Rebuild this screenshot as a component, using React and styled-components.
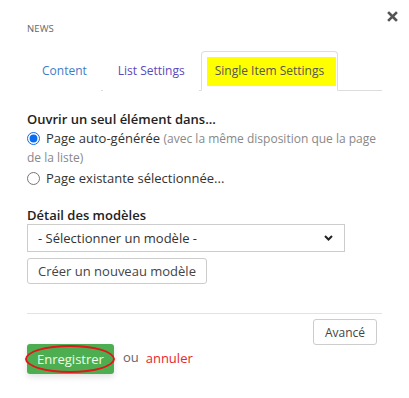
import React, { useState } from 'react';
import styled, { createGlobalStyle } from 'styled-components';

const GlobalStyle = createGlobalStyle`
  body {
    margin: 0;
    background: #fff;
    font-family: "Open Sans", "Liberation Sans", sans-serif;
    font-size: 13px;
    color: #333;
  }
`;

const Dialog = styled.div`
  position: relative;
  width: 409px;
  height: 398px;
  box-sizing: border-box;
  padding: 22px 27px 0 27px;
`;

const CloseButton = styled.button`
  position: absolute;
  top: 11px;
  right: 11px;
  width: 11px;
  height: 11px;
  padding: 0;
  border: none;
  background: none;
  cursor: pointer;
  display: flex;
`;

const Title = styled.div`
  font-size: 9.5px;
  color: #666;
  letter-spacing: 0.1px;
  line-height: 14px;
`;

const Tabs = styled.ul`
  display: flex;
  list-style: none;
  margin: 15px 0 0 0;
  padding: 0;
  border-bottom: 1px solid #ddd;
  font-size: 12px;
`;

const Tab = styled.li`
  margin-right: 2px;
  margin-bottom: -1px;
  padding: ${ p => p.active ? '5px 1px 3px 5px' : '10px 13px 10px 14px' };
  border: 1px solid ${ p => p.active ? '#ddd' : 'transparent' };
  border-bottom-color: ${ p => p.active ? '#fff' : 'transparent' };
  border-radius: 4px 4px 0 0;
  background: #fff;
  color: ${ p => p.color || '#555' };
  line-height: 18px;
  cursor: pointer;
`;

const Highlight = styled.span`
  display: block;
  background: #ffff00;
  padding: 5px 12px 6px 8px;
  color: #555;
`;

const Section = styled.div`
  margin-top: ${ p => p.top || 0 }px;
`;

const Heading = styled.div`
  font-weight: 600;
  color: #222;
  line-height: 19px;
`;

const RadioRow = styled.label`
  display: block;
  line-height: 19px;
  margin-top: ${ p => p.top || 0 }px;
  color: #333;
`;

const Radio = styled.input`
  width: 13px;
  height: 13px;
  margin: 0 6px 0 0;
  vertical-align: -2px;
  accent-color: #0a6cf0;
`;

const Muted = styled.span`
  color: #888;
  font-size: 12px;
`;

const SelectWrap = styled.div`
  position: relative;
  width: 318px;
  margin-top: -1px;
`;

const Select = styled.select`
  appearance: none;
  width: 100%;
  height: 28px;
  box-sizing: border-box;
  border: 1px solid #ccc;
  border-radius: 0;
  background: #fff;
  padding: 0 10px;
  font-family: inherit;
  font-size: 13px;
  color: #333;
`;

const Chevron = styled.svg`
  position: absolute;
  right: 12px;
  top: 11px;
  pointer-events: none;
`;

const Button = styled.button`
  height: 26px;
  box-sizing: border-box;
  padding: 0 ${ p => p.small ? 11 : 10 }px;
  margin-top: ${ p => p.top || 0 }px;
  border: 1px solid #ccc;
  border-radius: 3px;
  background: #fff;
  font-family: inherit;
  font-size: ${ p => p.small ? 12 : 13 }px;
  color: #444;
  cursor: pointer;
`;

const Divider = styled.hr`
  margin: 29px 0 0 0;
  border: none;
  border-top: 1px solid #e2e2e2;
`;

const AdvancedRow = styled.div`
  display: flex;
  justify-content: flex-end;
  padding-right: 5px;
  margin-top: 5px;
`;

const Footer = styled.div`
  display: flex;
  align-items: center;
  margin-top: -1px;
`;

const SaveWrap = styled.div`
  position: relative;
  display: flex;
  margin-right: 9px;
`;

const SaveButton = styled.button`
  height: 30px;
  padding: 0 10px;
  border: none;
  border-radius: 3px;
  background: #4cae50;
  color: #f4fbe8;
  font-family: inherit;
  font-size: 13px;
  box-shadow: 0 3px 6px rgba(0, 0, 0, 0.12);
  cursor: pointer;
`;

const Ellipse = styled.span`
  position: absolute;
  left: -2px;
  top: 1px;
  width: 90px;
  height: 28px;
  box-sizing: border-box;
  border: 2px solid #e4151b;
  border-radius: 50%;
  pointer-events: none;
`;

const Or = styled.span`
  color: #666;
  font-size: 13px;
  margin: -4px 7px 0 0;
`;

const Cancel = styled.a`
  color: #e8262c;
  font-size: 13px;
  margin-top: -3px;
  text-decoration: none;
  cursor: pointer;
`;

const App = () => {
  const [mode, setMode] = useState( 'auto' );

  return (
    <Dialog>
      <GlobalStyle />
      <CloseButton aria-label='close'>
        <svg width='11' height='11' viewBox='0 0 11 11'>
          <path d='M2 2 L9 9 M9 2 L2 9' stroke='#555' strokeWidth='2.6' strokeLinecap='square' />
        </svg>
      </CloseButton>
      <Title>NEWS</Title>

      <Tabs>
        <Tab color='#3f7cc8'>Content</Tab>
        <Tab color='#5a48c0'>List Settings</Tab>
        <Tab active><Highlight>Single Item Settings</Highlight></Tab>
      </Tabs>

      <Section top={ 19 }>
        <Heading>Ouvrir un seul élément dans...</Heading>
        <RadioRow>
          <Radio type='radio' name='open' checked={ mode === 'auto' } onChange={ () => setMode( 'auto' ) } />
          Page auto-générée <Muted>(avec la même disposition que la page de la liste)</Muted>
        </RadioRow>
        <RadioRow top={ 2 }>
          <Radio type='radio' name='open' checked={ mode === 'page' } onChange={ () => setMode( 'page' ) } />
          Page existante sélectionnée...
        </RadioRow>
      </Section>

      <Section top={ 18 }>
        <Heading>Détail des modèles</Heading>
        <SelectWrap>
          <Select defaultValue=''>
            <option value=''>- Sélectionner un modèle -</option>
          </Select>
          <Chevron width='9' height='6' viewBox='0 0 9 6'>
            <path d='M1 1 L4.5 4.5 L8 1' fill='none' stroke='#222' strokeWidth='2' />
          </Chevron>
        </SelectWrap>
        <Button top={ 6 }>Créer un nouveau modèle</Button>
      </Section>

      <Divider />
      <AdvancedRow>
        <Button small>Avancé</Button>
      </AdvancedRow>
      <Footer>
        <SaveWrap>
          <SaveButton>Enregistrer</SaveButton>
          <Ellipse />
        </SaveWrap>
        <Or>ou</Or>
        <Cancel>annuler</Cancel>
      </Footer>
    </Dialog>
  );
};

export default App;
